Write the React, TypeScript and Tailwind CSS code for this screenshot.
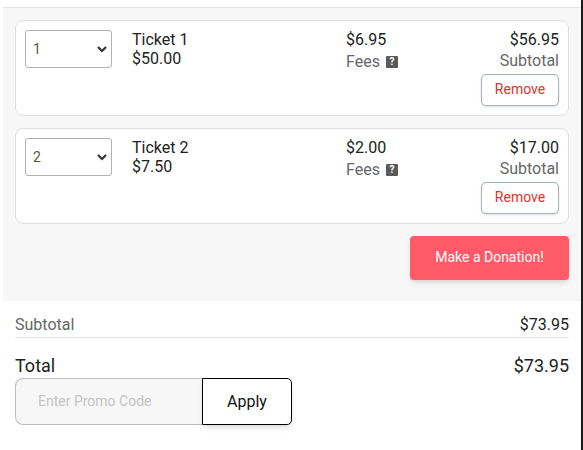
import React from 'react';

const font = "[font-family:Roboto,sans-serif]";

const TicketRow = ({ qty, name, price, fee, subtotal }: { qty: string; name: string; price: string; fee: string; subtotal: string }) => (
  <div className="flex h-[96px] rounded-lg border border-[#dfdfdf] bg-white pl-[9px] pr-[9px] pt-[9px]">
    <div className="flex h-[38px] w-[87px] shrink-0 items-center justify-between rounded-[3px] border border-[#b0b0b0] pl-[7px] pr-[4px] text-sm text-[#5f5147]">
      <span>{qty}</span>
      <svg width="10" height="7" viewBox="0 0 10 7" fill="none" stroke="#333" strokeWidth="2.2"><path d="M1 1l4 4 4-4" /></svg>
    </div>
    <div className="ml-[20px] w-[214px] shrink-0 text-base leading-[19px] text-[#222]">
      <div>{name}</div>
      <div>{price}</div>
    </div>
    <div className="w-[100px] shrink-0 text-base leading-[19px]">
      <div className="text-[#222]">{fee}</div>
      <div className="mt-[3px] flex items-center gap-[6px] text-[#666]">
        Fees
        <span className="flex h-[12px] w-[12px] items-center justify-center rounded-[1px] bg-[#5a5a5a] text-[10px] font-bold leading-none text-white">?</span>
      </div>
    </div>
    <div className="flex flex-1 flex-col items-end text-base leading-[19px]">
      <div className="text-[#222]">{subtotal}</div>
      <div className="mt-[2px] text-[#666]">Subtotal</div>
      <button className="mt-[4px] h-[32px] w-[78px] rounded-[5px] border border-[#a9b1bd] bg-white pb-[2px] text-sm text-[#e0342b] shadow-sm">Remove</button>
    </div>
  </div>
);

export default function App() {
  return (
    <div className={`${font} box-border h-[450px] w-[583px] overflow-hidden border-r-2 border-[#1c1c1c] bg-white`}>
      <div className="ml-[3px] w-[578px] border-t border-[#e2e2e2] bg-[#f7f7f7] pb-[21px] pl-[12px] pr-[12px] pt-[12px] mt-[7px]">
        <div className="flex flex-col gap-[12px]">
          <TicketRow qty="1" name="Ticket 1" price="$50.00" fee="$6.95" subtotal="$56.95" />
          <TicketRow qty="2" name="Ticket 2" price="$7.50" fee="$2.00" subtotal="$17.00" />
        </div>
        <div className="mt-[12px] flex justify-end">
          <button className="h-[44px] w-[159px] rounded-[4px] bg-[#ff5a67] pb-[2px] text-sm text-white shadow-md">Make a Donation!</button>
        </div>
      </div>
      <div className="pl-[15px] pr-[12px]">
        <div className="flex h-[37px] items-end justify-between border-b border-[#e2e2e2] text-base text-[#666]">
          <span>Subtotal</span>
          <span className="text-[#222]">$73.95</span>
        </div>
        <div className="mt-[17px] flex justify-between text-lg leading-[22px] text-[#222]">
          <span>Total</span>
          <span>$73.95</span>
        </div>
        <div className="mt-[1px] flex h-[47px] w-[277px]">
          <div className="flex flex-1 items-center rounded-l-lg border border-r-0 border-[#bdbdbd] bg-[#f7f7f7] pb-[2px] pl-[22px] text-sm text-[#c4c4c4]">Enter Promo Code</div>
          <button className="w-[90px] rounded-r-[5px] border border-black bg-white text-base text-[#111] shadow-md">Apply</button>
        </div>
      </div>
    </div>
  );
}
